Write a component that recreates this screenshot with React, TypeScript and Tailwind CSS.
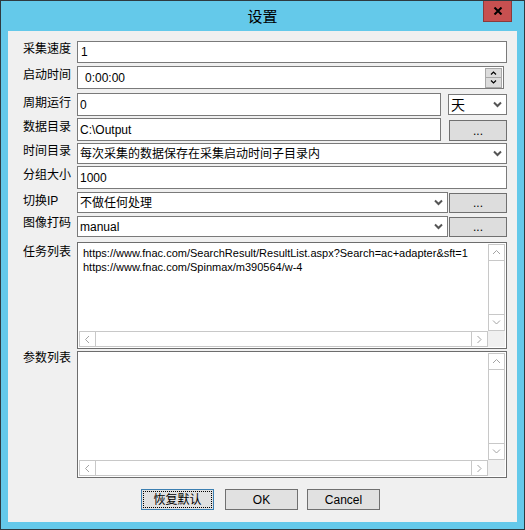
import React from 'react';

const Chevron: React.FC<{ dir?: 'down' | 'up' | 'left' | 'right'; color?: string; weight?: number }> = ({
  dir = 'down',
  color = '#555',
  weight = 2,
}) => {
  const paths = {
    down: 'M1 1.5l3.5 3.5L8 1.5',
    up: 'M1 5l3.5-3.5L8 5',
    left: 'M5 1L1.5 4.5 5 8',
    right: 'M1.5 1L5 4.5 1.5 8',
  };
  const horiz = dir === 'left' || dir === 'right';
  return (
    <svg width={horiz ? 7 : 9} height={horiz ? 9 : 7} viewBox={horiz ? '0 0 7 9' : '0 0 9 7'}>
      <path d={paths[dir]} fill="none" stroke={color} strokeWidth={weight} />
    </svg>
  );
};

const TextBox: React.FC<{ value: string; className?: string; indent?: string }> = ({ value, className = '', indent = 'pl-[2px]' }) => (
  <div className={`flex items-center border border-[#7a7a7a] bg-white text-[12px] ${indent} ${className}`}>{value}</div>
);

const Combo: React.FC<{ value: string; className?: string }> = ({ value, className = '' }) => (
  <div className={`flex items-center justify-between border border-[#7a7a7a] bg-white pl-[2px] pr-[4px] text-[12px] ${className}`}>
    <span>{value}</span>
    <Chevron />
  </div>
);

const BrowseButton: React.FC<{ className?: string }> = ({ className = '' }) => (
  <div className={`flex items-center justify-center border border-[#707070] bg-[#dddddd] text-[12px] leading-none ${className}`}>
    ...
  </div>
);

const Label: React.FC<{ text: string; className?: string }> = ({ text, className = '' }) => (
  <div className={`w-[54px] shrink-0 text-[12px] leading-[14px] ${className}`}>{text}</div>
);

// multiline text box with both scroll bars
const ListBox: React.FC<{ lines: string[]; className?: string }> = ({ lines, className = '' }) => (
  <div className={`flex min-w-0 flex-1 flex-col border border-[#6d6d6d] bg-white p-px ${className}`}>
    <div className="flex min-h-0 flex-1">
      <div className="min-w-0 flex-1 overflow-hidden whitespace-pre pl-[4px] pt-[2px] text-[11px] leading-[14px]">
        {lines.join('\n')}
      </div>
      <div className="flex w-[17px] shrink-0 flex-col">
        <div className="flex h-[17px] items-center justify-center border border-[#c8c8c8]">
          <Chevron dir="up" color="#a3a3a3" weight={1} />
        </div>
        <div className="flex-1 border-x border-[#c8c8c8]" />
        <div className="flex h-[17px] items-center justify-center border border-[#c8c8c8]">
          <Chevron dir="down" color="#a3a3a3" weight={1} />
        </div>
      </div>
    </div>
    <div className="flex h-[16px] shrink-0">
      <div className="flex w-[17px] items-center justify-center border border-[#c8c8c8]">
        <Chevron dir="left" color="#a3a3a3" weight={1} />
      </div>
      <div className="flex-1 border-y border-[#c8c8c8]" />
      <div className="flex w-[17px] items-center justify-center border border-[#c8c8c8]">
        <Chevron dir="right" color="#a3a3a3" weight={1} />
      </div>
      <div className="w-[17px] bg-[#f0f0f0]" />
    </div>
  </div>
);

const DialogButton: React.FC<{ text: string; focused?: boolean; className?: string }> = ({ text, focused, className = '' }) => (
  <div
    className={`flex h-[21px] w-[73px] items-center justify-center border bg-[#e1e1e1] p-[1px] text-[12px] ${
      focused ? 'border-[#3c7fb1]' : 'border-[#707070]'
    } ${className}`}
  >
    <div className={`flex h-full w-full items-center justify-center ${focused ? 'border border-dotted border-black' : ''}`}>
      {text}
    </div>
  </div>
);

export default function App() {
  return (
    <div className="flex h-[530px] w-[525px] flex-col border border-[#2e3a40] bg-[#64c9ea] font-['Liberation_Sans','Noto_Sans_CJK_SC',sans-serif] text-black">
      {/* title bar */}
      <div className="grid h-[30px] shrink-0 grid-cols-[1fr_auto_1fr]">
        <div />
        <div className="self-center pb-[1px] font-['Noto_Sans_CJK_SC',sans-serif] text-[15px] leading-none">设置</div>
        <div className="mr-[12px] flex h-[21px] w-[29px] items-center justify-center self-start justify-self-end border border-t-0 border-[#8b3a3a] bg-[#c75050]">
          <svg width="10" height="8" viewBox="0 0 10 8">
            <path d="M1.5 0.5l7 7M8.5 0.5l-7 7" stroke="#000" strokeWidth="2" />
          </svg>
        </div>
      </div>

      {/* client area */}
      <div className="mx-[7px] mb-[7px] flex min-w-0 flex-1 flex-col bg-[#f0f0f0] pl-[15px] pr-[10px]">
        <div className="mt-[10px] flex h-[22px]">
          <Label text="采集速度" className="pt-[1px]" />
          <TextBox value="1" className="flex-1" indent="pl-[3px]" />
        </div>

        <div className="mt-[3px] flex h-[23px]">
          <Label text="启动时间" className="pt-[2px]" />
          <div className="mr-[3px] flex flex-1 items-center justify-between border border-[#7a7a7a] bg-white pl-[7px] pr-[1px] text-[12px]">
            <span>0:00:00</span>
            <div className="flex flex-col">
              <div className="flex h-[10px] w-[17px] items-center justify-center border border-[#a8a8a8] bg-[#dcdcdc]">
                <svg width="7" height="4" viewBox="0 0 7 4">
                  <path d="M1 3.5l2.5-2.5L6 3.5" fill="none" stroke="#000" strokeWidth="1.2" />
                </svg>
              </div>
              <div className="flex h-[10px] w-[17px] items-center justify-center border border-t-0 border-[#a8a8a8] bg-[#dcdcdc]">
                <svg width="7" height="4" viewBox="0 0 7 4">
                  <path d="M1 0.5l2.5 2.5L6 0.5" fill="none" stroke="#000" strokeWidth="1.2" />
                </svg>
              </div>
            </div>
          </div>
        </div>

        <div className="mt-[4px] flex h-[23px]">
          <Label text="周期运行" className="pt-[3px]" />
          <TextBox value="0" className="w-[364px]" />
          <Combo value="天" className="ml-[7px] mt-[1px] h-[21px] flex-1 font-['Noto_Sans_CJK_SC',sans-serif] text-[14px]" />
        </div>

        <div className="mt-[2px] flex h-[23px]">
          <Label text="数据目录" className="pt-[2px]" />
          <TextBox value="C:\Output" className="w-[364px]" />
          <BrowseButton className="ml-[8px] mt-[2px] h-[21px] flex-1" />
        </div>

        <div className="mt-[2px] flex h-[21px]">
          <Label text="时间目录" className="pt-[1px]" />
          <Combo value="每次采集的数据保存在采集启动时间子目录内" className="flex-1" />
        </div>

        <div className="mt-[2px] flex h-[23px]">
          <Label text="分组大小" className="pt-[2px]" />
          <TextBox value="1000" className="flex-1" />
        </div>

        <div className="mt-[3px] flex h-[21px]">
          <Label text="切换IP" className="pt-[2px]" />
          <Combo value="不做任何处理" className="w-[371px]" />
          <BrowseButton className="ml-[1px] mt-[1px] h-[20px] flex-1" />
        </div>

        <div className="mt-[3px] flex h-[21px]">
          <Label text="图像打码" />
          <Combo value="manual" className="w-[371px]" />
          <BrowseButton className="ml-[1px] mt-[1px] h-[20px] flex-1" />
        </div>

        <div className="mt-[5px] flex h-[107px] min-w-0">
          <Label text="任务列表" className="pt-[3px]" />
          <ListBox
            lines={[
              'https://www.fnac.com/SearchResult/ResultList.aspx?Search=ac+adapter&sft=1',
              'https://www.fnac.com/Spinmax/m390564/w-4',
            ]}
          />
        </div>

        <div className="mt-[2px] flex h-[127px] min-w-0">
          <Label text="参数列表" />
          <ListBox lines={[]} />
        </div>

        <div className="ml-[118px] mt-[11px] flex">
          <DialogButton text="恢复默认" focused className="w-[72px]" />
          <DialogButton text="OK" className="ml-[11px]" />
          <DialogButton text="Cancel" className="ml-[9px]" />
        </div>
      </div>
    </div>
  );
}
